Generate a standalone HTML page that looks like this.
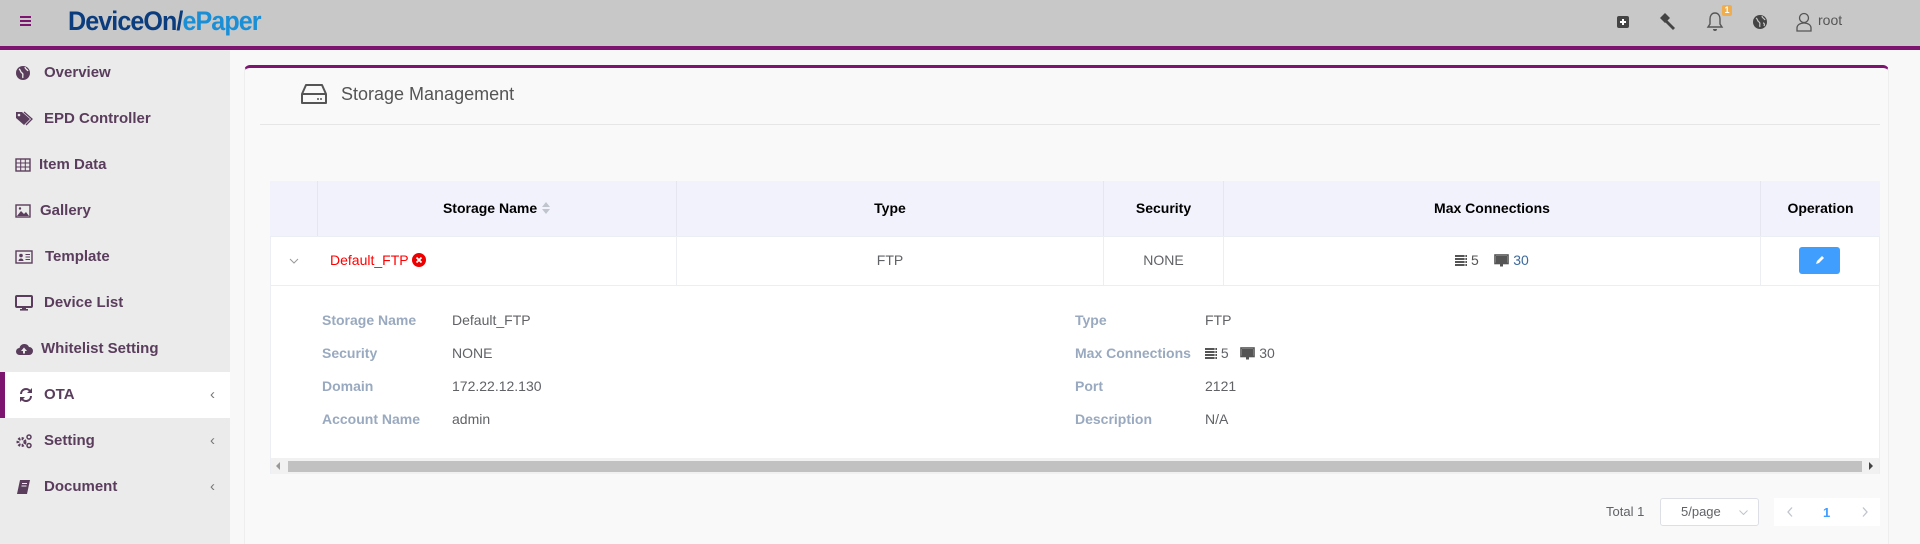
<!DOCTYPE html>
<html><head><meta charset="utf-8"><style>
*{margin:0;padding:0;box-sizing:border-box}
body{width:1920px;height:544px;overflow:hidden;background:#f8f8f8;font-family:"Liberation Sans",Arial,sans-serif;position:relative}
.abs{position:absolute}
#hdr{left:0;top:0;width:1920px;height:46px;background:#c8c8c8}
#pbar{left:0;top:46px;width:1920px;height:4px;background:#7d1470}
#side{left:0;top:50px;width:230px;height:494px;background:#ebebeb}
.mi{position:absolute;left:0;width:230px;height:46px;font-weight:bold;font-size:15px;color:#5a3d5c;line-height:46px}
.mi .ic{position:absolute;left:15px;top:15px}
.mi .tx{position:absolute;left:44px}
.mi .ar{position:absolute;left:210px;font-weight:normal;color:#777}
.lbl{position:absolute;font-weight:bold;font-size:14px;color:#99a9bf}
.val{position:absolute;font-size:14px;color:#606266}
.th{position:absolute;top:181px;height:55px;line-height:55px;text-align:center;font-weight:bold;font-size:14px;color:#000;border-right:1px solid #e6e6f0}
.td{position:absolute;top:236px;height:49px;line-height:49px;text-align:center;font-size:14px;color:#606266;border-right:1px solid #eceef3}
.srv{display:inline-block;vertical-align:-2px}
</style></head><body>
<div id="hdr" class="abs"></div>
<div id="pbar" class="abs"></div>
<div class="abs" style="left:20px;top:16px;width:11px;height:2px;background:#7d1470;box-shadow:0 4px 0 #7d1470,0 8px 0 #7d1470"></div>
<div class="abs" style="left:68px;top:6px;font-size:27px;font-weight:bold;letter-spacing:-1px;transform:scaleX(0.93);transform-origin:left;white-space:nowrap"><span style="color:#0b3d7e">DeviceOn/</span><span style="color:#1b8fd6">ePaper</span></div>
<svg class="abs" style="left:1615px;top:14px" width="16" height="16" viewBox="0 0 16 16"><rect x="2" y="2" width="12" height="12" rx="2" fill="#444"/><path d="M8 5v6M5 8h6" stroke="#fff" stroke-width="2"/></svg>
<svg class="abs" style="left:1658px;top:11px" width="20" height="20" viewBox="0 0 20 20"><path d="M2 7l5-5 5 5-5 5z" fill="#444"/><path d="M9 9l8 8-2 2-8-8z" fill="#444"/></svg>
<svg class="abs" style="left:1705px;top:11px" width="20" height="22" viewBox="0 0 20 22"><path d="M10 2c-3.5 0-5 3-5 6v5l-2 3h14l-2-3V8c0-3-1.5-6-5-6z" fill="none" stroke="#555" stroke-width="1.4"/><path d="M8 18a2 2 0 0 0 4 0" fill="#555"/></svg>
<div class="abs" style="left:1722px;top:5px;width:10px;height:11px;background:#f0ad4e;color:#fff;font-size:9px;font-weight:bold;text-align:center;line-height:11px;border-radius:2px">1</div>
<svg class="abs" style="left:1752px;top:14px" width="16" height="16" viewBox="0 0 16 16"><circle cx="8" cy="8" r="7" fill="#444"/><path d="M4 4c2 1 1 3 3 4s0 3 1 5M10 2c0 2 2 2 3 4M11 9c1 0 2 1 1 3" stroke="#c8c8c8" stroke-width="1.2" fill="none"/></svg>
<svg class="abs" style="left:1795px;top:11px" width="18" height="21" viewBox="0 0 18 21"><circle cx="9" cy="7" r="4.5" fill="none" stroke="#555" stroke-width="1.3"/><path d="M2 20v-3c0-3 3-5 7-5s7 2 7 5v3z" fill="none" stroke="#555" stroke-width="1.3"/></svg>
<div class="abs" style="left:1818px;top:12px;font-size:14px;color:#555">root</div>

<div id="side" class="abs">
 <div class="mi" style="top:0"><svg class="ic" width="16" height="16" viewBox="0 0 16 16"><circle cx="8" cy="8" r="7" fill="#5a3d5c"/><path d="M4 4c2 1 1 3 3 4s0 3 1 5M10 2c0 2 2 2 3 4" stroke="#ebebeb" stroke-width="1.3" fill="none"/></svg><span class="tx">Overview</span></div>
 <div class="mi" style="top:46px"><svg class="ic" width="18" height="16" viewBox="0 0 18 16"><path d="M1 1h6l8 7-6 6-8-7z" fill="#5a3d5c"/><path d="M9 1l8 7-6 6" fill="none" stroke="#5a3d5c" stroke-width="1.3"/><circle cx="4" cy="4" r="1.3" fill="#ebebeb"/></svg><span class="tx">EPD Controller</span></div>
 <div class="mi" style="top:92px"><svg class="ic" width="16" height="16" viewBox="0 0 16 16"><rect x="1" y="2" width="14" height="12" fill="none" stroke="#5a3d5c" stroke-width="1.4"/><path d="M1 6h14M1 10h14M5.7 2v12M10.3 2v12" stroke="#5a3d5c"/></svg><span class="tx" style="left:39px">Item Data</span></div>
 <div class="mi" style="top:138px"><svg class="ic" width="16" height="16" viewBox="0 0 16 16"><rect x="1" y="2" width="14" height="12" fill="none" stroke="#5a3d5c" stroke-width="1.4"/><path d="M2 13l4-5 3 3 2-2 3 4z" fill="#5a3d5c"/><circle cx="5" cy="5.5" r="1.2" fill="#5a3d5c"/></svg><span class="tx" style="left:40px">Gallery</span></div>
 <div class="mi" style="top:184px"><svg class="ic" width="18" height="16" viewBox="0 0 18 16"><rect x="1" y="2" width="16" height="12" fill="none" stroke="#5a3d5c" stroke-width="1.4"/><circle cx="6" cy="6.5" r="1.8" fill="#5a3d5c"/><path d="M3.5 12a2.5 2.5 0 0 1 5 0z" fill="#5a3d5c"/><path d="M10.5 5.5h4.5M10.5 8h4.5M10.5 10.5h4.5" stroke="#5a3d5c"/></svg><span class="tx" style="left:45px">Template</span></div>
 <div class="mi" style="top:230px"><svg class="ic" width="18" height="16" viewBox="0 0 18 16"><rect x="1" y="1" width="16" height="11" rx="1" fill="none" stroke="#5a3d5c" stroke-width="2"/><rect x="7" y="12" width="4" height="2" fill="#5a3d5c"/><rect x="5" y="14" width="8" height="1.6" fill="#5a3d5c"/></svg><span class="tx">Device List</span></div>
 <div class="mi" style="top:276px"><svg class="ic" width="18" height="16" viewBox="0 0 18 16"><path d="M4.5 14a3.5 3.5 0 0 1 0-7 5 5 0 0 1 9.5-1 4 4 0 0 1 0 8z" fill="#5a3d5c"/><path d="M9 6.5l-3 3.5h2v2.5h2V10h2z" fill="#ebebeb"/></svg><span class="tx" style="left:41px">Whitelist Setting</span></div>
 <div class="mi" style="top:322px;background:#fff"><div style="position:absolute;left:0;top:0;width:5px;height:46px;background:#7d1470"></div><svg class="ic" style="left:18px" width="16" height="16" viewBox="0 0 16 16"><path d="M3 7a5 5 0 0 1 9-3M13 9a5 5 0 0 1-9 3" fill="none" stroke="#5a3d5c" stroke-width="2"/><path d="M14 1v5h-5zM2 15v-5h5z" fill="#5a3d5c"/></svg><span class="tx">OTA</span><span class="ar">&lsaquo;</span></div>
 <div class="mi" style="top:368px"><svg class="ic" width="18" height="16" viewBox="0 0 18 16"><circle cx="6.5" cy="9" r="3.5" fill="none" stroke="#5a3d5c" stroke-width="3" stroke-dasharray="2 1.3"/><circle cx="14" cy="4" r="2" fill="none" stroke="#5a3d5c" stroke-width="1.5"/><circle cx="14" cy="12.5" r="2" fill="none" stroke="#5a3d5c" stroke-width="1.5"/></svg><span class="tx">Setting</span><span class="ar">&lsaquo;</span></div>
 <div class="mi" style="top:414px"><svg class="ic" width="16" height="16" viewBox="0 0 16 16"><path d="M5 1h10l-3 14H2z" fill="#5a3d5c"/><path d="M7 4.5h5M6.5 7h5" stroke="#ebebeb"/></svg><span class="tx">Document</span><span class="ar">&lsaquo;</span></div>
</div>

<div class="abs" style="left:244px;top:65px;width:1645px;height:479px;background:#f9f9f9;border-top:3px solid #7d1470;border-radius:6px 6px 0 0;border-left:1px solid #eee;border-right:1px solid #eee"></div>
<svg class="abs" style="left:300px;top:82px" width="28" height="24" viewBox="0 0 28 24"><path d="M6 3h16l4 9v9H2v-9z" fill="none" stroke="#555" stroke-width="2" stroke-linejoin="round"/><path d="M2 12h24" stroke="#555" stroke-width="2"/><circle cx="18" cy="17" r="1" fill="#555"/><circle cx="21" cy="17" r="1" fill="#555"/></svg>
<div class="abs" style="left:341px;top:84px;font-size:18px;color:#555">Storage Management</div>
<div class="abs" style="left:260px;top:124px;width:1620px;height:1px;background:#e6e6e6"></div>

<div class="abs" style="left:270px;top:181px;width:1610px;height:293px;background:#fff;border:1px solid #ebeef5"></div>
<div class="abs" style="left:270px;top:181px;width:1610px;height:55px;background:#f2f2fd"></div>
<div class="th" style="left:270px;width:48px"></div>
<div class="th" style="left:318px;width:359px">Storage Name <svg style="vertical-align:-2px" width="10" height="14" viewBox="0 0 10 14"><path d="M5 1l4 5H1zM5 13l4-5H1z" fill="#c0c4cc"/></svg></div>
<div class="th" style="left:677px;width:427px">Type</div>
<div class="th" style="left:1104px;width:120px">Security</div>
<div class="th" style="left:1224px;width:537px">Max Connections</div>
<div class="th" style="left:1761px;width:119px;border-right:none">Operation</div>
<div class="abs" style="left:270px;top:236px;width:1610px;height:1px;background:#ebeef5"></div>
<svg class="abs" style="left:289px;top:258px" width="10" height="6" viewBox="0 0 10 6"><path d="M1 1l4 4 4-4" fill="none" stroke="#999"/></svg>
<div class="td" style="left:318px;width:359px;text-align:left;padding-left:12px;color:#f00">Default_FTP <svg style="vertical-align:-2px" width="14" height="14" viewBox="0 0 14 14"><circle cx="7" cy="7" r="7" fill="#e00"/><path d="M4.5 4.5l5 5M9.5 4.5l-5 5" stroke="#fff" stroke-width="1.8"/></svg></div>
<div class="td" style="left:677px;width:427px">FTP</div>
<div class="td" style="left:1104px;width:120px">NONE</div>
<div class="td" style="left:1224px;width:537px;color:#555"><svg class="srv" width="12" height="12" viewBox="0 0 12 12"><path d="M0 1h12M0 4h12M0 7h12M0 10h12" stroke="#555" stroke-width="2"/><path d="M9 1h2M9 4h2M9 7h2M9 10h2" stroke="#fff" stroke-width="0.8"/></svg> 5 &nbsp;&nbsp; <svg class="srv" width="15" height="13" viewBox="0 0 15 13"><rect x="1" y="1" width="13" height="8.5" fill="none" stroke="#555" stroke-width="1.6"/><rect x="2" y="2" width="11" height="7" fill="#555"/><rect x="6" y="10" width="3" height="2.5" fill="#555"/></svg> <span style="color:#3c6a9c">30</span></div>
<div class="td" style="left:1761px;width:119px;border-right:none"></div>
<div class="abs" style="left:1799px;top:247px;width:41px;height:27px;background:#409eff;border-radius:3px"><svg width="41" height="27" viewBox="0 0 41 27"><path d="M17 17l1-3 5-5 2 2-5 5z" fill="#fff"/></svg></div>
<div class="abs" style="left:270px;top:285px;width:1610px;height:1px;background:#ebeef5"></div>

<div class="lbl" style="left:322px;top:312px">Storage Name</div><div class="val" style="left:452px;top:312px">Default_FTP</div>
<div class="lbl" style="left:322px;top:345px">Security</div><div class="val" style="left:452px;top:345px">NONE</div>
<div class="lbl" style="left:322px;top:378px">Domain</div><div class="val" style="left:452px;top:378px">172.22.12.130</div>
<div class="lbl" style="left:322px;top:411px">Account Name</div><div class="val" style="left:452px;top:411px">admin</div>
<div class="lbl" style="left:1075px;top:312px">Type</div><div class="val" style="left:1205px;top:312px">FTP</div>
<div class="lbl" style="left:1075px;top:345px">Max Connections</div><div class="val" style="left:1205px;top:345px"><svg class="srv" width="12" height="12" viewBox="0 0 12 12"><path d="M0 1h12M0 4h12M0 7h12M0 10h12" stroke="#555" stroke-width="2"/><path d="M9 1h2M9 4h2M9 7h2M9 10h2" stroke="#fff" stroke-width="0.8"/></svg> 5 &nbsp;&nbsp;<svg class="srv" width="15" height="13" viewBox="0 0 15 13"><rect x="1" y="1" width="13" height="8.5" fill="none" stroke="#555" stroke-width="1.6"/><rect x="2" y="2" width="11" height="7" fill="#555"/><rect x="6" y="10" width="3" height="2.5" fill="#555"/></svg> 30</div>
<div class="lbl" style="left:1075px;top:378px">Port</div><div class="val" style="left:1205px;top:378px">2121</div>
<div class="lbl" style="left:1075px;top:411px">Description</div><div class="val" style="left:1205px;top:411px">N/A</div>

<div class="abs" style="left:271px;top:458px;width:1608px;height:16px;background:#f1f1f1"></div>
<div class="abs" style="left:288px;top:461px;width:1574px;height:11px;background:#c1c1c1"></div>
<div class="abs" style="left:276px;top:462px;width:0;height:0;border:4px solid transparent;border-right-color:#999;border-left:none"></div>
<div class="abs" style="left:1869px;top:462px;width:0;height:0;border:4px solid transparent;border-left-color:#444;border-right:none"></div>

<div class="abs" style="left:1606px;top:504px;font-size:13px;color:#606266">Total 1</div>
<div class="abs" style="left:1660px;top:498px;width:99px;height:28px;background:#fff;border:1px solid #dcdfe6;border-radius:3px;font-size:13px;color:#606266;line-height:26px;padding-left:20px">5/page<svg style="position:absolute;right:10px;top:11px" width="9" height="5" viewBox="0 0 9 5"><path d="M0.5 0.5l4 4 4-4" fill="none" stroke="#c0c4cc"/></svg></div>
<div class="abs" style="left:1774px;top:498px;width:106px;height:28px;background:#fff"></div>
<svg class="abs" style="left:1787px;top:507px" width="6" height="10" viewBox="0 0 6 10"><path d="M5 0.5l-4 4.5 4 4.5" fill="none" stroke="#c0c4cc" stroke-width="1.3"/></svg>
<div class="abs" style="left:1823px;top:505px;font-size:13px;font-weight:bold;color:#409eff">1</div>
<svg class="abs" style="left:1862px;top:507px" width="6" height="10" viewBox="0 0 6 10"><path d="M1 0.5l4 4.5-4 4.5" fill="none" stroke="#c0c4cc" stroke-width="1.3"/></svg>
</body></html>
